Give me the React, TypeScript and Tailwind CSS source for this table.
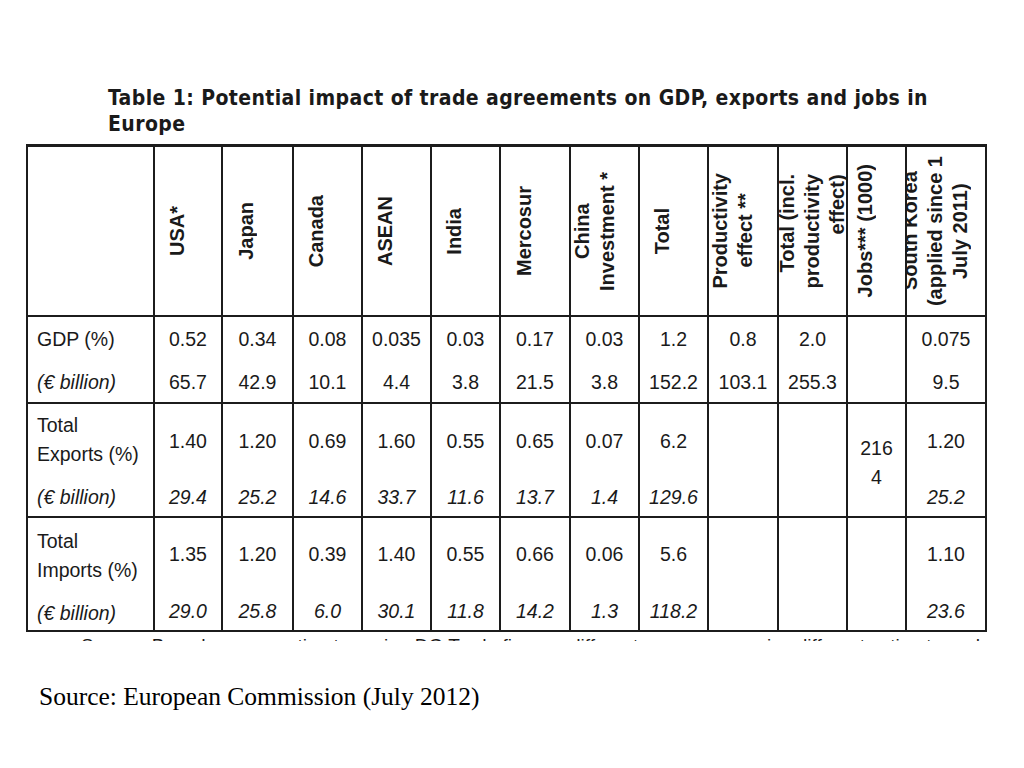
import React from 'react';

type Row = {
  label: string[];
  labelTops: number[];
  pt: number;
  gap: number;
  top: string[];
  bottom: string[];
  italic: boolean;
  h: string;
};

const heads: { lines: string[]; pad: string; align?: string; clip?: boolean }[] = [
  { lines: ['USA*'], pad: 'pr-[22px]' },
  { lines: ['Japan'], pad: 'pr-[22px]' },
  { lines: ['Canada'], pad: 'pr-[22px]' },
  { lines: ['ASEAN'], pad: 'pr-[22px]' },
  { lines: ['India'], pad: 'pr-[22px]' },
  { lines: ['Mercosur'], pad: 'pr-[22px]' },
  { lines: ['China', 'Investment *'], pad: 'pr-[20px]' },
  { lines: ['Total'], pad: 'pr-[22px]' },
  { lines: ['Productivity', 'effect **'], pad: 'pr-[20px]' },
  { lines: ['Total (incl.', 'productivity', 'effect)'], pad: 'pr-0', align: 'text-end' },
  { lines: ['Jobs*** (1000)'], pad: 'pr-[22px]' },
  { lines: ['South Korea', '(applied since 1', 'July 2011)'], pad: 'pr-[22px]', clip: true },
];

const rows: Row[] = [
  {
    label: ['GDP (%)'],
    labelTops: [11],
    pt: 11,
    gap: 21,
    top: ['0.52', '0.34', '0.08', '0.035', '0.03', '0.17', '0.03', '1.2', '0.8', '2.0', '', '0.075'],
    bottom: ['65.7', '42.9', '10.1', '4.4', '3.8', '21.5', '3.8', '152.2', '103.1', '255.3', '', '9.5'],
    italic: false,
    h: 'h-[87px]',
  },
  {
    label: ['Total', 'Exports (%)'],
    labelTops: [10, 7],
    pt: 26,
    gap: 34,
    top: ['1.40', '1.20', '0.69', '1.60', '0.55', '0.65', '0.07', '6.2', '', '', 'JOBS', '1.20'],
    bottom: ['29.4', '25.2', '14.6', '33.7', '11.6', '13.7', '1.4', '129.6', '', '', '', '25.2'],
    italic: true,
    h: 'h-[114px]',
  },
  {
    label: ['Total', 'Imports (%)'],
    labelTops: [12, 7],
    pt: 25,
    gap: 35,
    top: ['1.35', '1.20', '0.39', '1.40', '0.55', '0.66', '0.06', '5.6', '', '', '', '1.10'],
    bottom: ['29.0', '25.8', '6.0', '30.1', '11.8', '14.2', '1.3', '118.2', '', '', '', '23.6'],
    italic: true,
    h: 'h-[114px]',
  },
];

const cell = 'border-r-2 border-b-2 border-[#1c1c1c]';

function HeadCell({ h }: { h: (typeof heads)[number] }) {
  return (
    <div className={`${cell} h-[170px] flex items-center justify-center ${h.pad} ${h.clip ? 'overflow-hidden' : ''}`}>
      <div
        className={`[writing-mode:vertical-rl] rotate-180 font-bold text-[20px] leading-[25px] whitespace-nowrap ${h.align ?? 'text-center'}`}
      >
        {h.lines.map((l, i) => (
          <React.Fragment key={i}>
            {i > 0 && <br />}
            {l}
          </React.Fragment>
        ))}
      </div>
    </div>
  );
}

function DataRow({ r }: { r: Row }) {
  return (
    <>
      <div className={`${cell} ${r.h} pl-[9px]`}>
        {r.label.map((l, i) => (
          <div key={i} className="h-[22px] leading-[22px]" style={{ marginTop: r.labelTops[i] }}>
            {l}
          </div>
        ))}
        <div className="h-[22px] leading-[22px] italic mt-[21px]">(€ billion)</div>
      </div>
      {r.top.map((v, i) =>
        v === 'JOBS' ? (
          <div key={i} className={`${cell} ${r.h} flex flex-col items-center justify-center pt-[5px] leading-[29px]`}>
            <div>216</div>
            <div>4</div>
          </div>
        ) : (
          <div key={i} className={`${cell} ${r.h} flex flex-col items-center`} style={{ paddingTop: r.pt }}>
            <div className="h-[22px] leading-[22px]">{v}</div>
            <div className={`h-[22px] leading-[22px] ${r.italic ? 'italic' : ''}`} style={{ marginTop: r.gap }}>
              {r.bottom[i]}
            </div>
          </div>
        )
      )}
    </>
  );
}

export default function App() {
  return (
    <div className="w-[1024px] h-[768px] bg-white overflow-hidden text-[#1a1a1a]">
      <div
        className="pt-[85px] pl-[108px] font-bold text-[21px] leading-[26px] font-stretch-condensed tracking-[0.4px]"
        style={{ fontFamily: '"DejaVu Sans Condensed", "DejaVu Sans", sans-serif' }}
      >
        Table 1: Potential impact of trade agreements on GDP, exports and jobs in
        <br />
        Europe
      </div>

      <div
        className="mt-[7px] ml-[26px] w-[961px] text-[19.5px]"
        style={{ fontFamily: '"Liberation Sans", Arial, sans-serif' }}
      >
        <div className="grid grid-cols-[127px_68px_71px_69px_69px_69px_70px_69px_69px_70px_69px_59px_80px] border-t-[3px] border-l-2 border-[#1c1c1c]">
          <div className={`${cell} h-[170px]`} />
          {heads.map((h, i) => (
            <HeadCell key={i} h={h} />
          ))}
          {rows.map((r, i) => (
            <DataRow key={i} r={r} />
          ))}
        </div>
        <div className="h-[9px] overflow-hidden pl-[55px] pt-[3px] text-[19px] leading-[22px] whitespace-nowrap">
          Source: Based on own estimates using DG Trade figures; different sources may give different estimates, which should be
        </div>
      </div>

      <div
        className="mt-[41px] pl-[39px] text-[25.5px] leading-[30px] text-black"
        style={{ fontFamily: '"Liberation Serif", "Times New Roman", serif' }}
      >
        Source: European Commission (July 2012)
      </div>
    </div>
  );
}
